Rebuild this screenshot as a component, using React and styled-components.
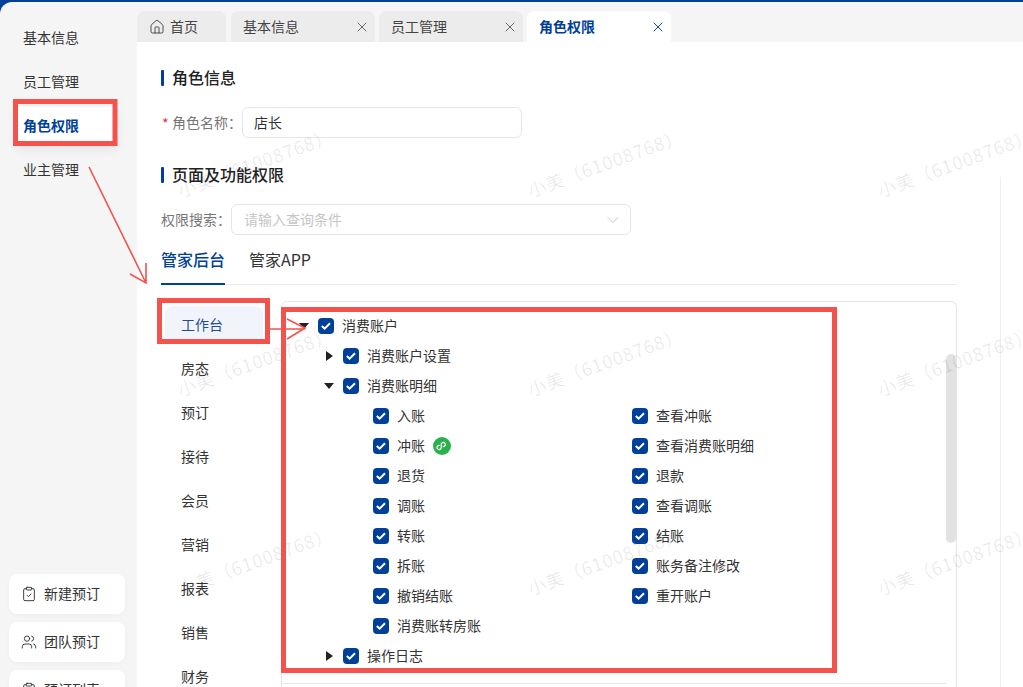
import React from "react"
import styled, { createGlobalStyle } from "styled-components"
import { ChevronDown, ClipboardCheck, ClipboardList, House, Users, X } from "lucide-react"

const BLUE = "#004098"
const RED = "#f4524d"

const GlobalStyle = createGlobalStyle`
  html, body {
    margin: 0;
    padding: 0;
    overflow: hidden;
    background: ${BLUE};
    font-family: "Noto Sans CJK SC", "Noto Sans", sans-serif;
    color: #333;
  }
`

const Page = styled.div`
  position: relative;
  width: 1023px;
  height: 687px;
  padding-top: 2px;
  box-sizing: border-box;
  overflow: hidden;
`

const Shell = styled.div`
  display: flex;
  height: 685px;
  background: #f5f5f5;
  border-top-left-radius: 12px;
  overflow: hidden;
`

// the CJK font sits a little low in its line box, this lifts it 1px
const Txt = styled.span`
  margin-bottom: 2px;
`

const Sidebar = styled.aside`
  flex: 0 0 137px;
  padding-top: 14px;
  box-sizing: border-box;
`

const SideItem = styled.div`
  display: flex;
  align-items: center;
  height: ${(p) => (p.$active ? "38px" : "44px")};
  margin: ${(p) => (p.$active ? "3px 20px 3px 17px" : "0")};
  padding-left: ${(p) => (p.$active ? "6px" : "23px")};
  font-size: 14px;
  font-weight: ${(p) => (p.$active ? 600 : 400)};
  color: ${(p) => (p.$active ? BLUE : "#333")};
  background: ${(p) => (p.$active ? "#fff" : "transparent")};
  box-shadow: ${(p) => (p.$active ? "0 4px 12px rgba(0,0,0,.08)" : "none")};
`

const ActionGroup = styled.div`
  display: flex;
  flex-direction: column;
  gap: 8px;
  margin: 382px 12px 0 9px;
`

const ActionButton = styled.div`
  display: flex;
  flex: 0 0 40px;
  align-items: center;
  gap: 7px;
  padding-left: 12px;
  background: #fff;
  border-radius: 8px;
  font-size: 14px;
  box-shadow: 0 1px 4px rgba(0,0,0,.03);
`

const Main = styled.main`
  flex: 1;
  display: flex;
  flex-direction: column;
  min-width: 0;
`

const TabBar = styled.div`
  display: flex;
  gap: 4px;
  height: 40px;
  padding-top: 9px;
  box-sizing: border-box;
`

const PageTab = styled.div`
  display: flex;
  align-items: center;
  justify-content: ${(p) => (p.$home ? "flex-start" : "space-between")};
  width: ${(p) => (p.$home ? "89px" : "144px")};
  padding: ${(p) => (p.$home ? "0 0 0 12px" : "0 5px 0 12px")};
  box-sizing: border-box;
  gap: 5px;
  margin-right: ${(p) => (p.$home ? "1px" : "0")};
  border-radius: 8px 8px 0 0;
  font-size: 14px;
  font-weight: ${(p) => (p.$active ? 600 : 400)};
  color: ${(p) => (p.$active ? BLUE : "#444")};
  background: ${(p) => (p.$active ? "#fff" : "#ececec")};
`

const Content = styled.div`
  flex: 1;
  display: flex;
  background: #fff;
  padding-left: 24px;
  min-height: 0;
`

const FormColumn = styled.div`
  flex: 0 0 796px;
  padding-top: 26px;
  box-sizing: border-box;
`

const RightRail = styled.div`
  flex: 0 0 auto;
  margin: 135px 0 0 43px;
  border-left: 1px solid #efefef;
`

const SectionTitle = styled.h2`
  display: flex;
  align-items: center;
  gap: 8px;
  height: 20px;
  margin: ${(p) => p.$top || 0} 0 0;
  font-size: 16px;
  font-weight: 500;
  color: #222;

  &::before {
    content: "";
    width: 3px;
    height: 16px;
    background: ${BLUE};
    border-radius: 1px;
  }
`

const FormRow = styled.div`
  display: flex;
  align-items: center;
  margin-top: 19px;
  font-size: 14px;
  color: #777;
`

const Required = styled.span`
  width: 11px;
  padding-left: 1px;
  box-sizing: border-box;
  color: #d9363e;
`

const Label = styled(Txt)`
  flex: 0 0 70px;
  white-space: nowrap;
`

const TextField = styled.div`
  display: flex;
  align-items: center;
  justify-content: space-between;
  width: ${(p) => p.$width};
  height: 31px;
  padding: 0 ${(p) => p.$pad};
  box-sizing: border-box;
  border: 1px solid #e6e6e6;
  border-radius: 6px;
  color: ${(p) => (p.$muted ? "#c6c6c6" : "#333")};

  svg {
    margin-right: -5px;
  }
`

const SubTabs = styled.div`
  display: flex;
  gap: 24px;
  height: 40px;
  margin-top: 10px;
  padding-top: 2px;
  box-sizing: border-box;
  border-bottom: 1px solid #ececec;
  font-size: 16px;
`

const SubTab = styled.div`
  height: 38px;
  line-height: 24px;
  box-sizing: border-box;
  margin-bottom: -1px;
  color: ${(p) => (p.$active ? BLUE : "#333")};
  font-weight: ${(p) => (p.$active ? 500 : 400)};
  border-bottom: 2px solid ${(p) => (p.$active ? BLUE : "transparent")};
`

const PermissionArea = styled.div`
  display: flex;
  margin-top: 16px;
`

const ModuleMenu = styled.div`
  flex: 0 0 120px;
  display: flex;
  flex-direction: column;
  gap: 6px;
  padding: 5px 18px 0 4px;
  box-sizing: border-box;
`

const ModuleItem = styled.div`
  flex: 0 0 38px;
  display: flex;
  align-items: center;
  padding-left: 16px;
  border-radius: 8px;
  font-size: 14px;
  color: ${(p) => (p.$active ? "#1f4e96" : "#333")};
  background: ${(p) => (p.$active ? "#f1f4fa" : "transparent")};
`

const TreeBox = styled.div`
  position: relative;
  flex: 0 0 676px;
  height: 500px;
  padding-top: 9px;
  box-sizing: border-box;
  border: 1px solid #e6e6e6;
  border-radius: 6px 6px 0 0;
`

const Scrollbar = styled.div`
  position: absolute;
  top: 52px;
  right: 0;
  width: 10px;
  height: 189px;
  background: #e2e2e2;
  border-radius: 5px;
`

const TreeRow = styled.div`
  display: flex;
  align-items: center;
  height: 30px;
  padding-left: ${(p) => p.$indent}px;
  font-size: 14px;
  color: #333;
`

const LeafGrid = styled.div`
  display: grid;
  grid-template-columns: 259px 259px;
  grid-auto-rows: 30px;
  padding-left: 91px;
`

const Leaf = styled.div`
  display: flex;
  align-items: center;
  font-size: 14px;
`

const Caret = styled.span`
  flex: 0 0 10px;
  width: 0;
  height: 0;
  margin-right: 9px;
  box-sizing: border-box;
  border-style: solid;
  border-color: transparent;
  ${(p) =>
    p.$open
      ? `border-width: 6px 5px 0 5px; border-top-color: #222;`
      : `flex-basis: 7px; margin-left: 2px; margin-right: 10px; border-width: 5px 0 5px 7px; border-left-color: #222;`}
`

const CheckBox = styled.span`
  flex: 0 0 16px;
  display: flex;
  align-items: center;
  justify-content: center;
  height: 16px;
  margin-right: 8px;
  background: ${BLUE};
  border-radius: 4px;
`

const TreeDivider = styled.div`
  height: 1px;
  margin: 12px 10px 0 0;
  background: #e6e6e6;
`

const MiniBadge = styled.svg`
  width: 18px;
  height: 18px;
  margin-left: 8px;
`

const WatermarkLayer = styled.div`
  position: absolute;
  top: 150px;
  left: 173px;
  display: grid;
  grid-template-columns: repeat(3, 350px);
  grid-auto-rows: 199px;
  pointer-events: none;
`

const Watermark = styled.div`
  width: 165px;
  height: 24px;
  line-height: 24px;
  font-size: 18px;
  letter-spacing: 1px;
  white-space: nowrap;
  color: rgba(0, 0, 0, 0.09);
  transform: rotate(-20deg);
`

const Annotations = styled.svg`
  position: absolute;
  top: 0;
  left: 0;
  pointer-events: none;
`

function Check() {
  return (
    <svg width="12" height="10" viewBox="0 0 12 10" fill="none">
      <path d="M1.8 5 4.6 7.6 10 2.2" stroke="#fff" strokeWidth="2" />
    </svg>
  )
}

function Node({ indent, open, children }) {
  return (
    <TreeRow $indent={indent}>
      <Caret $open={open} />
      <CheckBox>
        <Check />
      </CheckBox>
      <Txt>{children}</Txt>
    </TreeRow>
  )
}

const leaves = [
  ["入账", "查看冲账"],
  ["冲账", "查看消费账明细"],
  ["退货", "退款"],
  ["调账", "查看调账"],
  ["转账", "结账"],
  ["拆账", "账务备注修改"],
  ["撤销结账", "重开账户"],
  ["消费账转房账", null],
]

const modules = ["工作台", "房态", "预订", "接待", "会员", "营销", "报表", "销售", "财务"]

export default function App() {
  return (
    <Page>
      <GlobalStyle />
      <Shell>
        <Sidebar>
          <SideItem><Txt>基本信息</Txt></SideItem>
          <SideItem><Txt>员工管理</Txt></SideItem>
          <SideItem $active><Txt>角色权限</Txt></SideItem>
          <SideItem><Txt>业主管理</Txt></SideItem>
          <ActionGroup>
            <ActionButton>
              <ClipboardCheck size={16} strokeWidth={1.4} />
              <Txt>新建预订</Txt>
            </ActionButton>
            <ActionButton>
              <Users size={16} strokeWidth={1.4} />
              <Txt>团队预订</Txt>
            </ActionButton>
            <ActionButton>
              <ClipboardList size={16} strokeWidth={1.4} />
              <Txt>预订列表</Txt>
            </ActionButton>
          </ActionGroup>
        </Sidebar>
        <Main>
          <TabBar>
            <PageTab $home>
              <House size={16} strokeWidth={1.4} />
              <Txt>首页</Txt>
            </PageTab>
            <PageTab>
              <Txt>基本信息</Txt>
              <X size={16} strokeWidth={1.2} />
            </PageTab>
            <PageTab>
              <Txt>员工管理</Txt>
              <X size={16} strokeWidth={1.2} />
            </PageTab>
            <PageTab $active>
              <Txt>角色权限</Txt>
              <X size={16} strokeWidth={1.4} />
            </PageTab>
          </TabBar>
          <Content>
            <FormColumn>
              <SectionTitle><Txt>角色信息</Txt></SectionTitle>
              <FormRow>
                <Required>*</Required>
                <Label>角色名称：</Label>
                <TextField $width="280px" $pad="11px"><Txt>店长</Txt></TextField>
              </FormRow>
              <SectionTitle $top="27px"><Txt>页面及功能权限</Txt></SectionTitle>
              <FormRow>
                <Label>权限搜索：</Label>
                <TextField $width="400px" $pad="12px" $muted>
                  <Txt>请输入查询条件</Txt>
                  <ChevronDown size={20} strokeWidth={1} color="#bbb" />
                </TextField>
              </FormRow>
              <SubTabs>
                <SubTab $active>管家后台</SubTab>
                <SubTab>管家APP</SubTab>
              </SubTabs>
              <PermissionArea>
                <ModuleMenu>
                  {modules.map((name, i) => (
                    <ModuleItem key={name} $active={i === 0}>
                      <Txt>{name}</Txt>
                    </ModuleItem>
                  ))}
                </ModuleMenu>
                <TreeBox>
                  <Scrollbar />
                  <Node indent={17} open>消费账户</Node>
                  <Node indent={42}>消费账户设置</Node>
                  <Node indent={42} open>消费账明细</Node>
                  <LeafGrid>
                    {leaves.flat().map((text, i) =>
                      text ? (
                        <Leaf key={text}>
                          <CheckBox>
                            <Check />
                          </CheckBox>
                          <Txt>{text}</Txt>
                          {text === "冲账" && (
                            <MiniBadge viewBox="0 0 18 18">
                              <circle cx="9" cy="9" r="9" fill="#2bb14c" />
                              <path
                                d="M6.2 8.4a2.1 2.1 0 1 0 2 2.1V7.5a2.1 2.1 0 1 1 2 2.1"
                                fill="none"
                                stroke="#fff"
                                strokeWidth="1.2"
                                strokeLinecap="round"
                              />
                            </MiniBadge>
                          )}
                        </Leaf>
                      ) : (
                        <span key={i} />
                      )
                    )}
                  </LeafGrid>
                  <Node indent={42}>操作日志</Node>
                  <TreeDivider />
                </TreeBox>
              </PermissionArea>
            </FormColumn>
            <RightRail />
          </Content>
        </Main>
      </Shell>
      <WatermarkLayer>
        {Array.from({ length: 9 }, (_, i) => (
          <Watermark key={i}>小美（61008768）</Watermark>
        ))}
      </WatermarkLayer>
      <Annotations width="1023" height="687" fill="none" stroke={RED}>
        <rect x="15.5" y="101.5" width="99.5" height="42" strokeWidth="5" />
        <rect x="159.5" y="300.5" width="108" height="41" strokeWidth="5" />
        <rect x="283.5" y="309.5" width="551" height="361" strokeWidth="5" />
        <path d="M89 167 146 283M146 263V283L130 274" strokeWidth="1.6" />
        <path d="M270 329H305M287 319 305 328 287 339" strokeWidth="1.6" />
      </Annotations>
    </Page>
  )
}
